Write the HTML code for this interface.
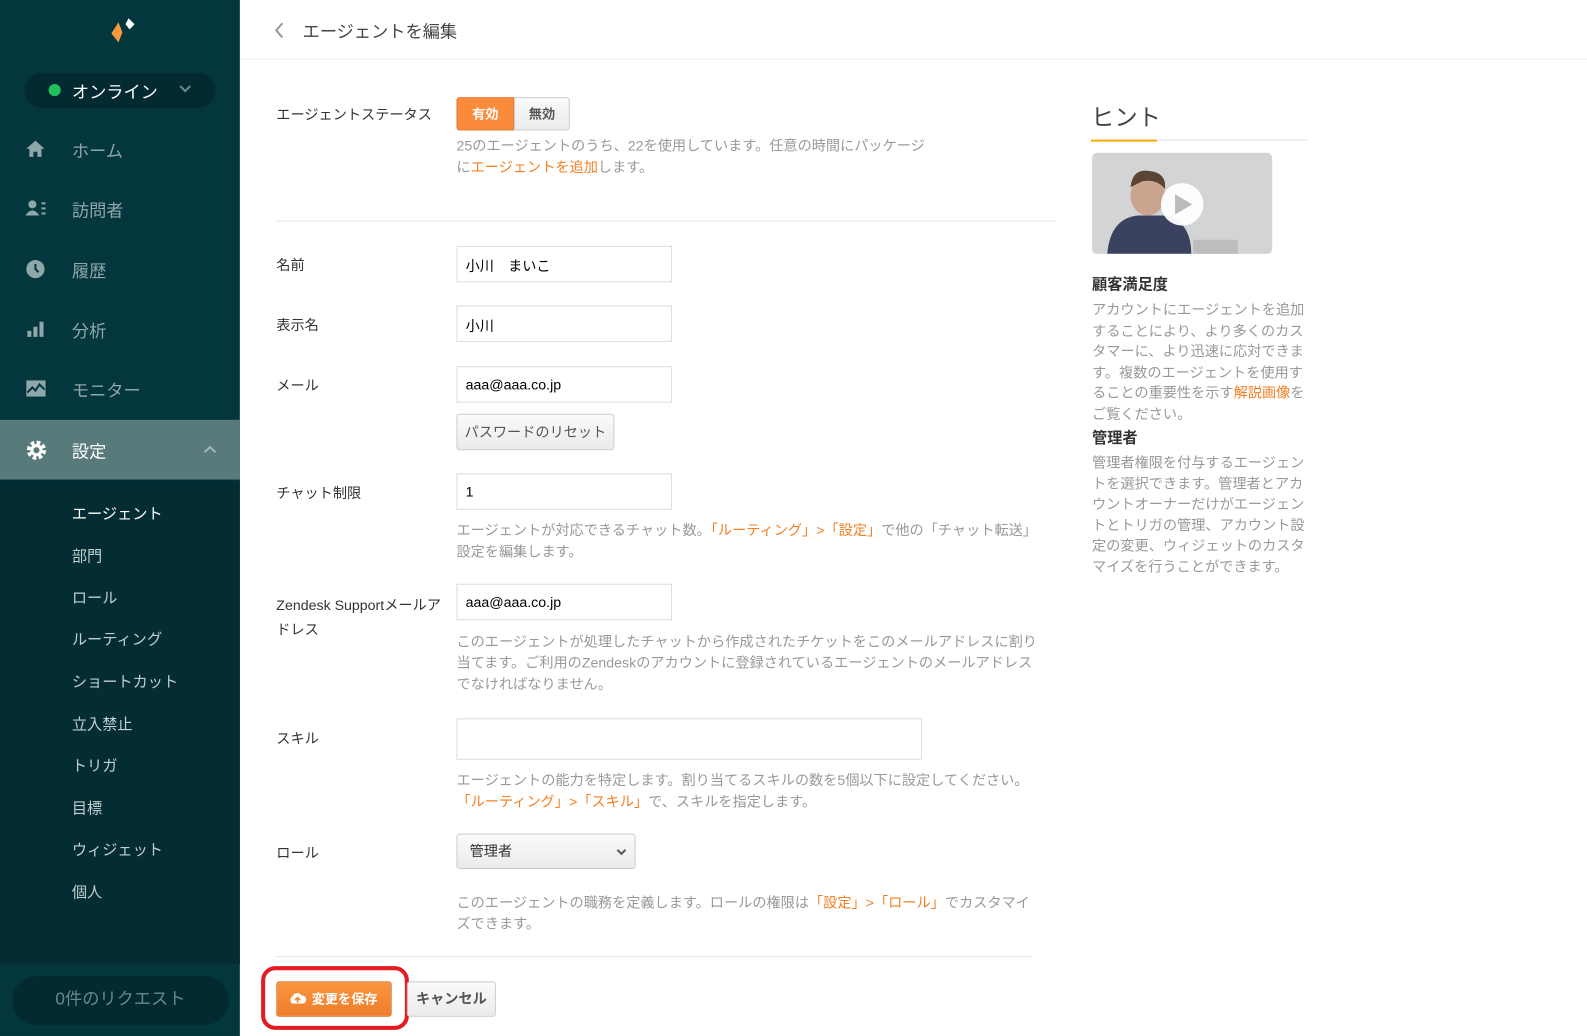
<!DOCTYPE html>
<html><head><meta charset="utf-8"><style>
*{margin:0;padding:0;box-sizing:border-box}
body{width:1587px;height:1036px;overflow:hidden;background:#fff;font-family:"Liberation Sans","Noto Sans CJK JP",sans-serif;position:relative;color:#333}
#w{position:absolute;left:0;top:0;width:1568px;height:1024px;transform:scale(1.0121,1.0117);transform-origin:0 0}
.a{position:absolute;white-space:nowrap}
#sb{position:absolute;left:0;top:0;width:237px;height:1024px;background:#03363d}
#sb .low{position:absolute;left:0;top:475px;width:237px;height:478px;background:#032d33}
.nav{position:absolute;left:0;width:237px;height:59px;color:#8fa7a9;font-size:17px}
.nav .t{position:absolute;left:71px;top:17px}
.nav svg{position:absolute;left:25px;top:19px}
.sub{position:absolute;left:71px;color:#c2d0d1;font-size:15px}
.lbl{position:absolute;left:273px;font-size:14px;color:#333;white-space:nowrap}
.inp{position:absolute;left:451px;height:36px;border:1px solid #ddd;background:#fff;font-size:14px;color:#000;padding:9px 0 0 8px}
.help{position:absolute;left:451px;font-size:14px;line-height:21px;color:#999;white-space:nowrap}
.o{color:#f47f22}
.btn{position:absolute;border:1px solid #ccc;border-radius:3px;background:linear-gradient(#fafafa,#ebebeb);color:#555;font-size:14px;font-weight:bold;text-align:center}
.hr{position:absolute;height:1px;background:#e6e6e6}
</style></head><body><div id="w">
<div id="sb">
<div class="low"></div>
<svg class="a" style="left:102px;top:14px" width="34" height="30" viewBox="0 0 34 30"><path d="M15 8 L8 19 L15 28 C11 22 11 14 15 8Z" fill="#f79a3e"/><path d="M15 8 C11 14 11 22 15 28 L19 18Z" fill="#f79a3e"/><path d="M25 4 L22 10 L26 15 L31 10Z" fill="#fff"/></svg>
<div class="a" style="left:24px;top:72px;width:189px;height:35px;border-radius:18px;background:#022a30"></div>
<div class="a" style="left:48px;top:83px;width:12px;height:12px;border-radius:50%;background:#1fc25a"></div>
<div class="a" style="left:71px;top:77px;color:#fff;font-size:17px">オンライン</div>
<svg class="a" style="left:177px;top:84px" width="12" height="8"><path d="M1 1 L6 6 L11 1" stroke="#6d8a8c" stroke-width="2" fill="none"/></svg>
<div class="nav" style="top:118px"><svg width="20" height="20" viewBox="0 0 20 20"><path d="M10 2 L1 10 H4 V18 H8 V13 H12 V18 H16 V10 H19Z" fill="#8fa7a9"/></svg><span class="t">ホーム</span></div>
<div class="nav" style="top:177px"><svg width="22" height="20" viewBox="0 0 22 20"><circle cx="7" cy="6" r="4" fill="#8fa7a9"/><path d="M0 17 Q7 7 14 17Z" fill="#8fa7a9"/><rect x="16" y="4" width="4" height="2" fill="#8fa7a9"/><rect x="16" y="9" width="4" height="2" fill="#8fa7a9"/><rect x="16" y="14" width="4" height="2" fill="#8fa7a9"/></svg><span class="t">訪問者</span></div>
<div class="nav" style="top:237px"><svg width="20" height="20" viewBox="0 0 20 20"><circle cx="10" cy="10" r="9" fill="#8fa7a9"/><path d="M10 5 V10 L13 13" stroke="#03363d" stroke-width="2" fill="none"/></svg><span class="t">履歴</span></div>
<div class="nav" style="top:296px"><svg width="20" height="20" viewBox="0 0 20 20"><rect x="2" y="12" width="4" height="6" fill="#8fa7a9"/><rect x="8" y="8" width="4" height="10" fill="#8fa7a9"/><rect x="14" y="3" width="4" height="15" fill="#8fa7a9"/></svg><span class="t">分析</span></div>
<div class="nav" style="top:355px"><svg width="22" height="20" viewBox="0 0 22 20"><rect x="1" y="2" width="19" height="16" fill="#8fa7a9"/><path d="M2 14 L7 9 L10 12 L14 6 L19 11" stroke="#03363d" stroke-width="2" fill="none"/></svg><span class="t">モニター</span></div>
<div class="nav" style="top:415px;background:#587a7b;color:#fff"><svg width="22" height="22" viewBox="0 0 22 22"><circle cx="11" cy="11" r="7" fill="none" stroke="#fff" stroke-width="5" stroke-dasharray="3.3 2.2"/><circle cx="11" cy="11" r="6" fill="#fff"/><circle cx="11" cy="11" r="3" fill="#587a7b"/></svg><span class="t">設定</span><svg style="left:201px;top:25px" width="13" height="8"><path d="M1 7 L6.5 2 L12 7" stroke="#9fb5b6" stroke-width="2" fill="none"/></svg></div>
<div class="sub" style="top:497px;color:#fff">エージェント</div>
<div class="sub" style="top:539px">部門</div>
<div class="sub" style="top:580px">ロール</div>
<div class="sub" style="top:621px">ルーティング</div>
<div class="sub" style="top:663px">ショートカット</div>
<div class="sub" style="top:705px">立入禁止</div>
<div class="sub" style="top:746px">トリガ</div>
<div class="sub" style="top:788px">目標</div>
<div class="sub" style="top:829px">ウィジェット</div>
<div class="sub" style="top:871px">個人</div>
<div class="a" style="left:12px;top:965px;width:214px;height:48px;border-radius:24px;background:#022a30;color:#68898b;font-size:17px;text-align:center;line-height:46px">0件のリクエスト</div>
</div>

<svg class="a" style="left:270px;top:21px" width="12" height="18"><path d="M9 2 L3 9 L9 16" stroke="#999" stroke-width="2" fill="none"/></svg>
<div class="a" style="left:299px;top:17px;font-size:17px;color:#444">エージェントを編集</div>
<div class="hr" style="left:237px;top:58px;width:1350px;background:#eee"></div>

<div class="lbl" style="top:103px">エージェントステータス</div>
<div class="a" style="left:451px;top:96px;width:57px;height:33px;background:#f98b3b;border:1px solid #e77d30;border-radius:3px 0 0 3px;color:#fff;font-size:13px;font-weight:bold;text-align:center;line-height:31px">有効</div>
<div class="a" style="left:508px;top:96px;width:55px;height:33px;background:linear-gradient(#fafafa,#ebebeb);border:1px solid #ccc;border-radius:0 3px 3px 0;color:#555;font-size:13px;font-weight:bold;text-align:center;line-height:31px">無効</div>
<div class="help" style="top:134px">25のエージェントのうち、22を使用しています。任意の時間にパッケージ<br>に<span class="o">エージェントを追加</span>します。</div>
<div class="hr" style="left:273px;top:218px;width:771px"></div>

<div class="lbl" style="top:252px">名前</div>
<div class="inp" style="top:243px;width:213px">小川　まいこ</div>
<div class="lbl" style="top:311px">表示名</div>
<div class="inp" style="top:302px;width:213px">小川</div>
<div class="lbl" style="top:371px">メール</div>
<div class="inp" style="top:362px;width:213px">aaa@aaa.co.jp</div>
<div class="btn" style="left:451px;top:409px;width:156px;height:36px;line-height:34px;font-weight:normal">パスワードのリセット</div>
<div class="lbl" style="top:477px">チャット制限</div>
<div class="inp" style="top:468px;width:213px">1</div>
<div class="help" style="top:514px">エージェントが対応できるチャット数。<span class="o">「ルーティング」&gt;「設定」</span>で他の「チャット転送」<br>設定を編集します。</div>
<div class="lbl" style="top:586px;line-height:24px">Zendesk Supportメールア<br>ドレス</div>
<div class="inp" style="top:577px;width:213px">aaa@aaa.co.jp</div>
<div class="help" style="top:624px">このエージェントが処理したチャットから作成されたチケットをこのメールアドレスに割り<br>当てます。ご利用のZendeskのアカウントに登録されているエージェントのメールアドレス<br>でなければなりません。</div>
<div class="lbl" style="top:720px">スキル</div>
<div class="inp" style="top:710px;width:460px;height:41px"></div>
<div class="help" style="top:761px">エージェントの能力を特定します。割り当てるスキルの数を5個以下に設定してください。<br><span class="o">「ルーティング」&gt;「スキル」</span>で、スキルを指定します。</div>
<div class="lbl" style="top:833px">ロール</div>
<div class="btn" style="left:451px;top:824px;width:177px;height:35px;line-height:33px;text-align:left;padding-left:12px;font-weight:normal;color:#333">管理者<svg style="position:absolute;left:157px;top:14px" width="10" height="7"><path d="M1 1 L5 5 L9 1" stroke="#555" stroke-width="2" fill="none"/></svg></div>
<div class="help" style="top:882px">このエージェントの職務を定義します。ロールの権限は<span class="o">「設定」&gt;「ロール」</span>でカスタマイ<br>ズできます。</div>
<div class="hr" style="left:273px;top:945px;width:747px"></div>

<div class="a" style="left:258px;top:955px;width:146px;height:63px;border:4px solid #e51b24;border-radius:14px"></div>
<div class="a" style="left:273px;top:970px;width:114px;height:35px;border-radius:3px;background:linear-gradient(#f99540,#ef7d2b);border:1px solid #e07428;color:#fff;font-size:13px;font-weight:bold;line-height:33px;padding-left:34px">変更を保存</div>
<svg class="a" style="left:285px;top:980px" width="18" height="13" viewBox="0 0 18 13"><path d="M4 12 A4 4 0 0 1 4 5 A5 5 0 0 1 13 4 A4 4 0 0 1 14 12Z" fill="#fff"/><path d="M9 11 V6 M6.5 8.5 L9 6 L11.5 8.5" stroke="#f0842f" stroke-width="1.6" fill="none"/></svg>
<div class="btn" style="left:402px;top:970px;width:88px;height:35px;line-height:33px">キャンセル</div>

<div class="a" style="left:1078px;top:97px;font-size:23px;color:#444">ヒント</div>
<div class="hr" style="left:1078px;top:138px;width:214px;background:#ddd"></div>
<div class="hr" style="left:1078px;top:138px;width:65px;height:2px;background:#f8a907"></div>
<div class="a" style="left:1079px;top:151px;width:178px;height:100px;border-radius:5px;background:#d3d4d6;overflow:hidden">
<svg width="178" height="100"><ellipse cx="55" cy="42" rx="17" ry="20" fill="#c9a48f"/><path d="M38 34 Q40 15 57 18 Q74 20 72 36 Q65 26 50 28Z" fill="#5b4432"/><path d="M15 100 Q18 65 45 62 L75 62 Q98 70 98 100Z" fill="#3b4260"/><rect x="100" y="86" width="44" height="16" fill="#bdbdbe"/><circle cx="89" cy="51" r="21" fill="#fff" opacity=".95"/><path d="M82 41 L99 51 L82 61Z" fill="#bbb"/></svg></div>
<div class="a" style="left:1079px;top:270px;font-size:15px;font-weight:bold;color:#333">顧客満足度</div>
<div class="help" style="left:1079px;top:296px;line-height:20.6px">アカウントにエージェントを追加<br>することにより、より多くのカス<br>タマーに、より迅速に応対できま<br>す。複数のエージェントを使用す<br>ることの重要性を示す<span class="o">解説画像</span>を<br>ご覧ください。</div>
<div class="a" style="left:1079px;top:422px;font-size:15px;font-weight:bold;color:#333">管理者</div>
<div class="help" style="left:1079px;top:447px;line-height:20.6px">管理者権限を付与するエージェン<br>トを選択できます。管理者とアカ<br>ウントオーナーだけがエージェン<br>トとトリガの管理、アカウント設<br>定の変更、ウィジェットのカスタ<br>マイズを行うことができます。</div>
</div></body></html>
